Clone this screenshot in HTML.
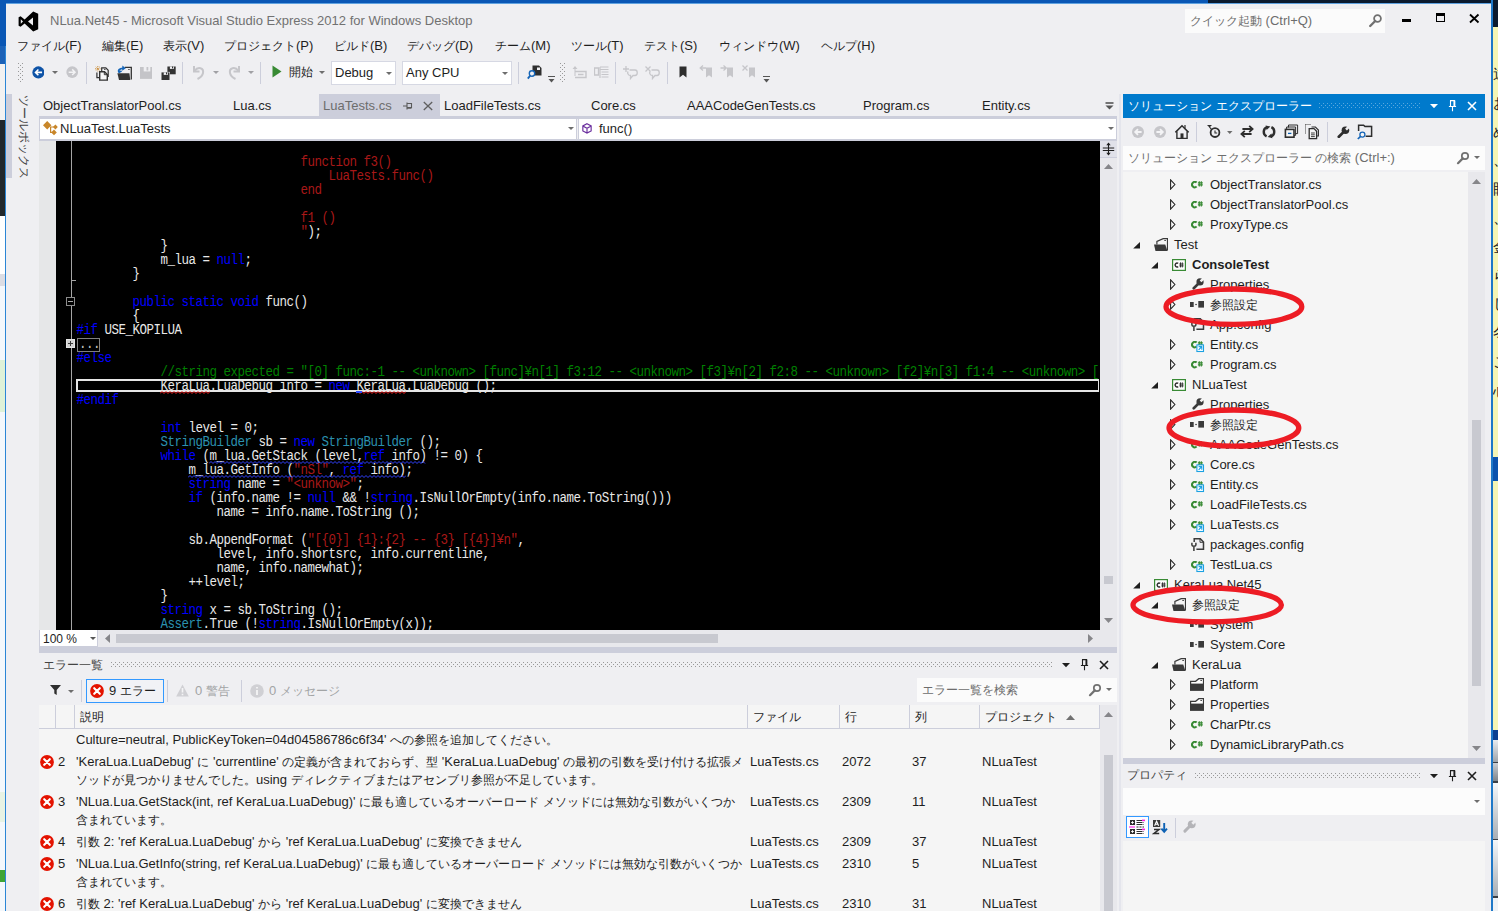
<!DOCTYPE html>
<html><head><meta charset="utf-8"><title>NLua.Net45 - Microsoft Visual Studio Express 2012 for Windows Desktop</title>
<style>
html,body{margin:0;padding:0;}
html{overflow:hidden;}
body{width:1498px;height:911px;overflow:hidden;position:relative;background:#fff;font-family:"Liberation Sans",sans-serif;font-size:13px;color:#1E1E1E;}
.a{position:absolute;box-sizing:border-box;}
.t{white-space:nowrap;}
.j{font-size:12px;}
.m{font-family:"Liberation Mono",monospace;font-size:12.5px;letter-spacing:-0.5px;white-space:pre;transform:scaleY(1.1);transform-origin:0 60%;}
.m .j{font-size:11.667px;}
.k{color:#0000FF;} .s{color:#A81818;} .c{color:#008000;} .y{color:#2B91AF;}
.sqr{background:repeating-linear-gradient(135deg,#f00 0 1px,transparent 1px 2px);}
</style></head><body>
<svg width="0" height="0" style="position:absolute"><defs>
<pattern id="pg" width="4" height="4" patternUnits="userSpaceOnUse"><rect x="0" y="0" width="1" height="1" fill="#999"/><rect x="2" y="2" width="1" height="1" fill="#999"/></pattern>
<pattern id="pb" width="4" height="4" patternUnits="userSpaceOnUse"><rect x="0" y="0" width="1" height="1" fill="#59A8DE"/><rect x="2" y="2" width="1" height="1" fill="#59A8DE"/></pattern>
</defs></svg>
<div class="a " style="left:0px;top:0px;width:1498px;height:4px;background:#0A57B5;"></div>
<div class="a " style="left:1208px;top:0px;width:290px;height:4px;background:#0B1A2E;"></div>
<div class="a " style="left:0px;top:0px;width:6px;height:911px;background:#F4F8FC;"></div>
<div class="a " style="left:0px;top:0px;width:6px;height:46px;background:#0A57B5;"></div>
<div class="a " style="left:0px;top:46px;width:6px;height:18px;background:#1C62B8;"></div>
<div class="a " style="left:0px;top:64px;width:6px;height:56px;background:#F2F2F2;"></div>
<div class="a " style="left:0px;top:120px;width:6px;height:96px;background:#22282C;"></div>
<div class="a " style="left:0px;top:216px;width:6px;height:60px;background:#FFFFFF;"></div>
<div class="a " style="left:0px;top:274px;width:6px;height:12px;background:#DCDDE4;"></div>
<div class="a " style="left:0px;top:360px;width:6px;height:52px;background:#DFF2D8;"></div>
<div class="a " style="left:0px;top:792px;width:6px;height:30px;background:#E8F3E4;"></div>
<div class="a " style="left:0px;top:870px;width:6px;height:12px;background:#3FA535;"></div>
<div class="a " style="left:5px;top:46px;width:1px;height:865px;background:#2B86D6;"></div>
<div class="a " style="left:1491px;top:0px;width:7px;height:911px;background:#F5F5B4;"></div>
<div class="a " style="left:1491px;top:0px;width:7px;height:27px;background:#0B1A2E;"></div>
<div class="a " style="left:1491px;top:457px;width:7px;height:24px;background:#0A52AE;"></div>
<div class="a " style="left:1491px;top:730px;width:7px;height:10px;background:#0A3F90;"></div>
<div class="a " style="left:1491px;top:740px;width:7px;height:22px;background:linear-gradient(180deg,#E8ECF0,#9EA4AA);"></div>
<div class="a " style="left:1491px;top:762px;width:7px;height:1px;background:#3A3F45;"></div>
<div class="a " style="left:1491px;top:763px;width:7px;height:18px;background:linear-gradient(180deg,#C9CED4,#7E848A);"></div>
<div class="a " style="left:1491px;top:781px;width:7px;height:1.5px;background:#3A3F45;"></div>
<div class="a " style="left:1491px;top:782.5px;width:7px;height:56px;background:linear-gradient(180deg,#F4F7FA,#A8AEB4);"></div>
<div class="a " style="left:1491px;top:838.5px;width:7px;height:1.5px;background:#3A3F45;"></div>
<div class="a " style="left:1491px;top:840px;width:7px;height:56px;background:linear-gradient(180deg,#F4F7FA,#A8AEB4);"></div>
<div class="a " style="left:1491px;top:896px;width:7px;height:1.5px;background:#3A3F45;"></div>
<div class="a " style="left:1491px;top:897.5px;width:7px;height:14px;background:#EEF2F6;"></div>
<div class="a " style="left:1491px;top:0px;width:2px;height:911px;background:#1E78C8;"></div>
<div class="a " style="left:6px;top:3px;width:1485px;height:908px;background:#EFEFF2;border-top:1px solid #5FA2E0;"></div>
<div class="a " style="left:1119px;top:94px;width:2px;height:817px;background:#E4E5EC;"></div>
<div class="a" style="left:1493px;top:60px;width:5px;height:360px;overflow:hidden;color:#222;font-size:15px;line-height:28.8px;white-space:pre;">遠
お
め
、
眼
、
金
ら
し
冬
こ
心</div>
<svg class="a" style="left:18px;top:11px;" width="21" height="21" viewBox="0 0 21 21"><path d="M15.2 0.6 L20.2 2.8 V18.2 L15.2 20.4 L6.6 12.6 L2.6 15.8 L0.6 14.8 V6.2 L2.6 5.2 L6.6 8.4 Z M15 6.4 L10 10.5 L15 14.6 Z M2.8 8.2 V12.8 L5 10.5 Z" fill="#000" fill-rule="evenodd"/></svg>
<div class="a t " style="left:50px;top:11.5px;height:18px;line-height:18px;color:#717171;font-size:13px;">NLua.Net45 - Microsoft Visual Studio Express 2012 for Windows Desktop</div>
<div class="a " style="left:1185px;top:9px;width:200px;height:24px;background:#FBFBFB;"></div>
<div class="a t " style="left:1190px;top:11.5px;height:18px;line-height:18px;color:#6D6D6D;"><span class="j">クイック起動</span> (Ctrl+Q)</div>
<svg class="a" style="left:1368px;top:13px;" width="15" height="15" viewBox="0 0 15 15"><circle cx="9.5" cy="5.5" r="3.4" fill="none" stroke="#717171" stroke-width="1.8"/><path d="M7.2 8 L2.2 13" stroke="#717171" stroke-width="2.4" stroke-linecap="round"/></svg>
<div class="a " style="left:1402px;top:19px;width:9px;height:3px;background:#000;"></div>
<div class="a " style="left:1436px;top:13px;width:9px;height:9px;border:1px solid #000;border-top:3px solid #000;"></div>
<svg class="a" style="left:1469px;top:13px;" width="11" height="11" viewBox="0 0 11 11"><path d="M1 1.5 L9.5 9.5 M9.5 1.5 L1 9.5" stroke="#000" stroke-width="1.8"/></svg>
<div class="a t " style="left:17px;top:36.5px;height:18px;line-height:18px;color:#1E1E1E;"><span class="j">ファイル</span>(F)</div>
<div class="a t " style="left:102px;top:36.5px;height:18px;line-height:18px;color:#1E1E1E;"><span class="j">編集</span>(E)</div>
<div class="a t " style="left:163px;top:36.5px;height:18px;line-height:18px;color:#1E1E1E;"><span class="j">表示</span>(V)</div>
<div class="a t " style="left:224px;top:36.5px;height:18px;line-height:18px;color:#1E1E1E;"><span class="j">プロジェクト</span>(P)</div>
<div class="a t " style="left:334px;top:36.5px;height:18px;line-height:18px;color:#1E1E1E;"><span class="j">ビルド</span>(B)</div>
<div class="a t " style="left:407px;top:36.5px;height:18px;line-height:18px;color:#1E1E1E;"><span class="j">デバッグ</span>(D)</div>
<div class="a t " style="left:495px;top:36.5px;height:18px;line-height:18px;color:#1E1E1E;"><span class="j">チーム</span>(M)</div>
<div class="a t " style="left:571px;top:36.5px;height:18px;line-height:18px;color:#1E1E1E;"><span class="j">ツール</span>(T)</div>
<div class="a t " style="left:644px;top:36.5px;height:18px;line-height:18px;color:#1E1E1E;"><span class="j">テスト</span>(S)</div>
<div class="a t " style="left:719px;top:36.5px;height:18px;line-height:18px;color:#1E1E1E;"><span class="j">ウィンドウ</span>(W)</div>
<div class="a t " style="left:821px;top:36.5px;height:18px;line-height:18px;color:#1E1E1E;"><span class="j">ヘルプ</span>(H)</div>
<svg class="a" style="left:18px;top:63px;" width="5" height="19" viewBox="0 0 5 19"><rect width="5" height="19" fill="url(#pg)"/></svg>
<svg class="a" style="left:31.6px;top:66px;" width="12.8" height="12.8" viewBox="0 0 14 14"><circle cx="7" cy="7" r="6.6" fill="#0E53A7"/><path d="M11 7 H4.2 M7 3.8 L3.8 7 L7 10.2" stroke="#fff" stroke-width="1.7" fill="none"/></svg>
<svg class="a" style="left:52px;top:71px;" width="6" height="3" viewBox="0 0 6 3"><path d="M0 0 H6 L3 3 Z" fill="#6D6D6D"/></svg>
<svg class="a" style="left:65.6px;top:66.4px;" width="12.4" height="12.4" viewBox="0 0 14 14"><circle cx="7" cy="7" r="6.6" fill="#C6C6CA"/><path d="M3 7 H9.8 M7 3.8 L10.2 7 L7 10.2" stroke="#F2F2F4" stroke-width="1.7" fill="none"/></svg>
<div class="a " style="left:86px;top:62px;width:1px;height:22px;background:#CCCEDB;"></div>
<svg class="a" style="left:94.5px;top:65.5px;" width="14" height="15" viewBox="0 0 14 15"><path d="M2.8 0 V5.6 M0 2.8 H5.6 M0.8 0.8 L4.8 4.8 M4.8 0.8 L0.8 4.8" stroke="#C8862A" stroke-width="0.9" stroke-dasharray="1 0.7"/><path d="M6.7 5 V1.9 H10.8 L13.2 4.3 V10.5 H12.5 M1.9 6.6 V11.7 H4" fill="none" stroke="#333" stroke-width="1.2"/><path d="M9 3.4 H10.6" stroke="#333" stroke-width="0.9"/><path d="M4.7 5.7 H9.5 L12.3 8.5 V14.1 H4.7 Z" fill="#F7F7F9" stroke="#333" stroke-width="1.4"/><path d="M9.3 5.9 V8.7 H12.1" fill="none" stroke="#333" stroke-width="1"/></svg>
<svg class="a" style="left:116.5px;top:65px;" width="15" height="15.4" viewBox="0 0 15 15.4"><path d="M7.8 2.3 H14.3 V14.6" fill="none" stroke="#333" stroke-width="1.3"/><path d="M11.2 4.5 H12.7" stroke="#333" stroke-width="0.9"/><path d="M0.4 8.3 H12.4 L13.3 14.9 H2 Z" fill="#333"/><path d="M2.6 7.6 C0.6 5.6 2.4 3.2 6.4 3.4" fill="none" stroke="#1565B8" stroke-width="1.9"/><path d="M5.4 0.6 L8.8 3.3 L5.2 5.8 Z" fill="#1565B8"/><path d="M2 7.2 L4.6 6" stroke="#1565B8" stroke-width="1.6"/></svg>
<svg class="a" style="left:140px;top:67px;" width="12.2" height="12" viewBox="0 0 12.2 12"><rect x="0" y="0" width="12.2" height="11.9" fill="#C4C4C8"/><rect x="3.7" y="0" width="6.6" height="4.4" fill="#EFEFF2"/><rect x="6.5" y="0" width="1.8" height="3.5" fill="#C4C4C8"/></svg>
<svg class="a" style="left:160.5px;top:65.5px;" width="15.5" height="14.6" viewBox="0 0 15.5 14.6"><rect x="6.4" y="0.5" width="8.3" height="7.8" fill="#333"/><rect x="8.9" y="0.5" width="4" height="2.4" fill="#EFEFF2"/><rect x="11" y="0.5" width="1.1" height="1.9" fill="#333"/><rect x="0" y="5.9" width="9" height="8.7" fill="#EFEFF2"/><rect x="0.5" y="6.4" width="8" height="7.8" fill="#333"/><rect x="2.7" y="6.4" width="4.2" height="2.5" fill="#EFEFF2"/><rect x="5" y="6.4" width="1.1" height="2" fill="#333"/></svg>
<div class="a " style="left:182px;top:62px;width:1px;height:22px;background:#CCCEDB;"></div>
<svg class="a" style="left:191px;top:65px;" width="15" height="15" viewBox="0 0 15 15"><path d="M3 1 V6.5 H8.5" fill="none" stroke="#C6C6CA" stroke-width="2"/><path d="M3.5 6 C7 1 13 3 12 8 C11.5 10.5 9.5 12.5 6.5 14" fill="none" stroke="#C6C6CA" stroke-width="2"/></svg>
<svg class="a" style="left:213px;top:71px;" width="6" height="3" viewBox="0 0 6 3"><path d="M0 0 H6 L3 3 Z" fill="#A0A0A4"/></svg>
<svg class="a" style="left:227px;top:65px;" width="15" height="15" viewBox="0 0 15 15"><path d="M12 1 V6.5 H6.5" fill="none" stroke="#C6C6CA" stroke-width="2"/><path d="M11.5 6 C8 1 2 3 3 8 C3.5 10.5 5.5 12.5 8.5 14" fill="none" stroke="#C6C6CA" stroke-width="2"/></svg>
<svg class="a" style="left:248px;top:71px;" width="6" height="3" viewBox="0 0 6 3"><path d="M0 0 H6 L3 3 Z" fill="#A0A0A4"/></svg>
<div class="a " style="left:260px;top:62px;width:1px;height:22px;background:#CCCEDB;"></div>
<svg class="a" style="left:272px;top:65px;" width="10" height="13" viewBox="0 0 10 13"><path d="M0.5 0.5 L9.5 6.5 L0.5 12.5 Z" fill="#388A34"/></svg>
<div class="a t " style="left:289px;top:63px;height:18px;line-height:18px;color:#1E1E1E;"><span class="j">開始</span></div>
<svg class="a" style="left:319px;top:71px;" width="6" height="3" viewBox="0 0 6 3"><path d="M0 0 H6 L3 3 Z" fill="#6D6D6D"/></svg>
<div class="a " style="left:331px;top:61px;width:65px;height:24px;background:#FFFFFF;border:1px solid #D6D8E3;"></div>
<div class="a t " style="left:335px;top:63.5px;height:18px;line-height:18px;color:#1E1E1E;">Debug</div>
<svg class="a" style="left:386px;top:72px;" width="6" height="3" viewBox="0 0 6 3"><path d="M0 0 H6 L3 3 Z" fill="#6D6D6D"/></svg>
<div class="a " style="left:402px;top:61px;width:110px;height:24px;background:#FFFFFF;border:1px solid #D6D8E3;"></div>
<div class="a t " style="left:406px;top:63.5px;height:18px;line-height:18px;color:#1E1E1E;">Any CPU</div>
<svg class="a" style="left:502px;top:72px;" width="6" height="3" viewBox="0 0 6 3"><path d="M0 0 H6 L3 3 Z" fill="#6D6D6D"/></svg>
<div class="a " style="left:518px;top:62px;width:1px;height:22px;background:#CCCEDB;"></div>
<svg class="a" style="left:527px;top:64px;" width="16" height="16" viewBox="0 0 16 16"><path d="M5.5 1.5 H12 L14.5 4 V11.5 H5.5 Z" fill="#2E2E2E"/><rect x="10" y="3.5" width="3" height="2.5" fill="#EFEFF2"/><circle cx="5" cy="9.5" r="2.7" fill="#EFEFF2" stroke="#1565B8" stroke-width="1.4"/><path d="M3.2 11.6 L0.8 14.6" stroke="#1565B8" stroke-width="1.8"/></svg>
<svg class="a" style="left:548px;top:76px;" width="7" height="7" viewBox="0 0 7 7"><path d="M0 0.5 H7" stroke="#555" stroke-width="1"/><path d="M0.5 3 H6.5 L3.5 6.5 Z" fill="#555"/></svg>
<svg class="a" style="left:560px;top:63px;" width="5" height="19" viewBox="0 0 5 19"><rect width="5" height="19" fill="url(#pg)"/></svg>
<svg class="a" style="left:572px;top:66px;" width="15" height="13" viewBox="0 0 15 13"><path d="M3 0 L0.5 3 H5.5 Z M2.5 3 H3.5 V10 H2.5 Z" fill="#C6C6CA"/><path d="M3 5.5 H14 V11.5 H3 M6 8.5 H11.5" fill="none" stroke="#C6C6CA" stroke-width="1.4"/></svg>
<svg class="a" style="left:594px;top:66px;" width="15" height="13" viewBox="0 0 15 13"><path d="M0.5 2 H4.5 V9 H0.5 Z" fill="none" stroke="#C6C6CA" stroke-width="1.3"/><path d="M6 1 H14.5 M6 3.5 H14.5 M7.5 6 H14.5 M7.5 8.5 H14.5 M7.5 11 H14.5 M6 1 V12" stroke="#C6C6CA" stroke-width="1.2" fill="none"/></svg>
<div class="a " style="left:615px;top:62px;width:1px;height:22px;background:#CCCEDB;"></div>
<svg class="a" style="left:623px;top:66px;" width="16" height="14" viewBox="0 0 16 14"><path d="M3 0 V6 M0 3 H6" stroke="#C6C6CA" stroke-width="1.3"/><path d="M6.5 4 H12 C15 4 15 9.5 12 9.5 H10 L7.5 12.5 V9.5 C4.5 9.5 4.5 6.5 5 5.5" fill="none" stroke="#C6C6CA" stroke-width="1.3"/></svg>
<svg class="a" style="left:645px;top:66px;" width="16" height="14" viewBox="0 0 16 14"><path d="M0.5 0.5 L5.5 5.5 M5.5 0.5 L0.5 5.5" stroke="#C6C6CA" stroke-width="1.3"/><path d="M6.5 4 H12 C15 4 15 9.5 12 9.5 H10 L7.5 12.5 V9.5 C4.5 9.5 4.5 6.5 5 5.5" fill="none" stroke="#C6C6CA" stroke-width="1.3"/></svg>
<div class="a " style="left:667px;top:62px;width:1px;height:22px;background:#CCCEDB;"></div>
<svg class="a" style="left:679px;top:66px;" width="8" height="12" viewBox="0 0 8 12"><path d="M0.5 0.5 H7.5 V11.5 L4 8.8 L0.5 11.5 Z" fill="#2E2E2E"/></svg>
<svg class="a" style="left:699px;top:65px;" width="14" height="13" viewBox="0 0 14 13"><path d="M7 2.5 H13 V12.5 L10 10.2 L7 12.5 Z" fill="#C6C6CA"/><path d="M7 3 H1.5 M4 0.5 L1.2 3 L4 5.5" stroke="#C6C6CA" stroke-width="1.3" fill="none"/></svg>
<svg class="a" style="left:720px;top:65px;" width="14" height="13" viewBox="0 0 14 13"><path d="M7 2.5 H13 V12.5 L10 10.2 L7 12.5 Z" fill="#C6C6CA"/><path d="M0.5 3 H6 M3.5 0.5 L6.3 3 L3.5 5.5" stroke="#C6C6CA" stroke-width="1.3" fill="none"/></svg>
<svg class="a" style="left:742px;top:65px;" width="14" height="13" viewBox="0 0 14 13"><path d="M7 2.5 H13 V12.5 L10 10.2 L7 12.5 Z" fill="#C6C6CA"/><path d="M0.5 0.5 L5.5 5.5 M5.5 0.5 L0.5 5.5" stroke="#C6C6CA" stroke-width="1.3" fill="none"/></svg>
<svg class="a" style="left:763px;top:76px;" width="7" height="7" viewBox="0 0 7 7"><path d="M0 0.5 H7" stroke="#555" stroke-width="1"/><path d="M0.5 3 H6.5 L3.5 6.5 Z" fill="#555"/></svg>
<div class="a " style="left:6px;top:94px;width:6px;height:84px;background:#CCCEDB;"></div>
<div class="a t" style="left:32.5px;top:95px;height:18px;line-height:18px;transform-origin:0 0;transform:rotate(90deg);color:#444;"><span class="j">ツールボックス</span></div>
<div class="a " style="left:319px;top:94px;width:121px;height:23px;background:#CCCEDB;"></div>
<div class="a " style="left:39px;top:116px;width:1078px;height:3px;background:#CCCEDB;"></div>
<div class="a t " style="left:43px;top:96.8px;height:18px;line-height:18px;color:#1E1E1E;">ObjectTranslatorPool.cs</div>
<div class="a t " style="left:233px;top:96.8px;height:18px;line-height:18px;color:#1E1E1E;">Lua.cs</div>
<div class="a t " style="left:323px;top:96.8px;height:18px;line-height:18px;color:#6D6D6D;">LuaTests.cs</div>
<div class="a t " style="left:444px;top:96.8px;height:18px;line-height:18px;color:#1E1E1E;">LoadFileTests.cs</div>
<div class="a t " style="left:591px;top:96.8px;height:18px;line-height:18px;color:#1E1E1E;">Core.cs</div>
<div class="a t " style="left:687px;top:96.8px;height:18px;line-height:18px;color:#1E1E1E;">AAACodeGenTests.cs</div>
<div class="a t " style="left:863px;top:96.8px;height:18px;line-height:18px;color:#1E1E1E;">Program.cs</div>
<div class="a t " style="left:982px;top:96.8px;height:18px;line-height:18px;color:#1E1E1E;">Entity.cs</div>
<svg class="a" style="left:402.5px;top:101.6px;" width="10" height="8" viewBox="0 0 10 8"><path d="M0 4 H4 M4 0.5 V7.5 M4 1.5 H8.5 V5.5 H4 M4 6.2 H8.5" stroke="#5A5A5A" stroke-width="1.1" fill="none"/></svg>
<svg class="a" style="left:423px;top:101px;" width="10" height="10" viewBox="0 0 10 10"><path d="M0.8 1 L9.2 9 M9.2 1 L0.8 9" stroke="#5F5F5F" stroke-width="1.3"/></svg>
<svg class="a" style="left:1105px;top:102px;" width="9" height="8" viewBox="0 0 9 8"><path d="M0.5 1 H8.5" stroke="#555" stroke-width="1.6"/><path d="M0.5 3.5 H8.5 L4.5 7.5 Z" fill="#555"/></svg>
<div class="a " style="left:39px;top:119px;width:538px;height:20px;background:#FFFFFF;border:1px solid #CCCEDB;border-top:0;border-bottom:0;"></div>
<div class="a " style="left:578px;top:119px;width:539px;height:20px;background:#FFFFFF;border:1px solid #CCCEDB;border-top:0;border-bottom:0;"></div>
<svg class="a" style="left:43px;top:121px;" width="16" height="15" viewBox="0 0 16 15"><path d="M4.2 0.1 L8.4 4.3 L4.2 8.5 L0 4.3 Z M12.4 3.6 L14.8 6 L12.4 8.4 L10 6 Z M11 8.6 L13.8 11.4 L11 14.2 L8.2 11.4 Z" fill="#C8862A"/><path d="M7 6 H11 M7.6 6 V11.4 H9.4" stroke="#C8862A" stroke-width="1.2" fill="none"/></svg>
<div class="a t " style="left:60px;top:119.5px;height:18px;line-height:18px;color:#1E1E1E;">NLuaTest.LuaTests</div>
<svg class="a" style="left:568px;top:127px;" width="6" height="3" viewBox="0 0 6 3"><path d="M0 0 H6 L3 3 Z" fill="#6D6D6D"/></svg>
<svg class="a" style="left:581.5px;top:123px;" width="10" height="10.8" viewBox="0 0 12 13"><path d="M6 0.8 L11 3.5 V9.5 L6 12.2 L1 9.5 V3.5 Z M1 3.5 L6 6.3 L11 3.5 M6 6.3 V12.2" fill="none" stroke="#6A2E9E" stroke-width="1.4"/></svg>
<div class="a t " style="left:599px;top:119.5px;height:18px;line-height:18px;color:#1E1E1E;">func()</div>
<svg class="a" style="left:1108px;top:127px;" width="6" height="3" viewBox="0 0 6 3"><path d="M0 0 H6 L3 3 Z" fill="#6D6D6D"/></svg>
<div class="a " style="left:39px;top:139px;width:1078px;height:2px;background:#CCCEDB;"></div>
<div class="a " style="left:39px;top:141px;width:17px;height:489px;background:#E6E7E8;"></div>
<div class="a " style="left:56px;top:141px;width:1044px;height:489px;background:#000000;"></div>
<div class="a " style="left:71px;top:141px;width:1px;height:489px;background:#A5A5A5;"></div>
<div class="a " style="left:71px;top:280px;width:5px;height:1px;background:#A5A5A5;"></div>
<div class="a" style="left:56px;top:140px;width:1044px;height:490px;overflow:hidden;color:#E8E8E8;">
<div class="a m" style="left:244.5px;top:16px;height:14px;line-height:14px;"><span class="s">function f3()</span></div>
<div class="a m" style="left:272.5px;top:30px;height:14px;line-height:14px;"><span class="s">LuaTests.func()</span></div>
<div class="a m" style="left:244.5px;top:44px;height:14px;line-height:14px;"><span class="s">end</span></div>
<div class="a m" style="left:244.5px;top:72px;height:14px;line-height:14px;"><span class="s">f1 ()</span></div>
<div class="a m" style="left:244.5px;top:86px;height:14px;line-height:14px;"><span class="s">"</span>);</div>
<div class="a m" style="left:104.5px;top:100px;height:14px;line-height:14px;">}</div>
<div class="a m" style="left:104.5px;top:114px;height:14px;line-height:14px;">m_lua = <span class="k">null</span>;</div>
<div class="a m" style="left:76.5px;top:128px;height:14px;line-height:14px;">}</div>
<div class="a m" style="left:76.5px;top:156px;height:14px;line-height:14px;"><span class="k">public static void</span> func()</div>
<div class="a m" style="left:76.5px;top:170px;height:14px;line-height:14px;">{</div>
<div class="a m" style="left:20.5px;top:184px;height:14px;line-height:14px;"><span class="k">#if</span> USE_KOPILUA</div>
<div class="a m" style="left:20.5px;top:212px;height:14px;line-height:14px;"><span class="k">#else</span></div>
<div class="a m" style="left:104.5px;top:226px;height:14px;line-height:14px;"><span class="c">//string expected = "[0] func:-1 -- &lt;unknown&gt; [func]¥n[1] f3:12 -- &lt;unknown&gt; [f3]¥n[2] f2:8 -- &lt;unknown&gt; [f2]¥n[3] f1:4 -- &lt;unknown&gt; [</span></div>
<div class="a m" style="left:104.5px;top:240px;height:14px;line-height:14px;">KeraLua.LuaDebug info = <span class="k">new</span> KeraLua.LuaDebug ();</div>
<div class="a m" style="left:20.5px;top:254px;height:14px;line-height:14px;"><span class="k">#endif</span></div>
<div class="a m" style="left:104.5px;top:282px;height:14px;line-height:14px;"><span class="k">int</span> level = 0;</div>
<div class="a m" style="left:104.5px;top:296px;height:14px;line-height:14px;"><span class="y">StringBuilder</span> sb = <span class="k">new</span> <span class="y">StringBuilder</span> ();</div>
<div class="a m" style="left:104.5px;top:310px;height:14px;line-height:14px;"><span class="k">while</span> (m_lua.GetStack (level,<span class="k">ref</span> info) != 0) {</div>
<div class="a m" style="left:132.5px;top:324px;height:14px;line-height:14px;">m_lua.GetInfo (<span class="s">"nSl"</span>, <span class="k">ref</span> info);</div>
<div class="a m" style="left:132.5px;top:338px;height:14px;line-height:14px;"><span class="k">string</span> name = <span class="s">"&lt;unknow&gt;"</span>;</div>
<div class="a m" style="left:132.5px;top:352px;height:14px;line-height:14px;"><span class="k">if</span> (info.name != <span class="k">null</span> &amp;&amp; !<span class="k">string</span>.IsNullOrEmpty(info.name.ToString()))</div>
<div class="a m" style="left:160.5px;top:366px;height:14px;line-height:14px;">name = info.name.ToString ();</div>
<div class="a m" style="left:132.5px;top:394px;height:14px;line-height:14px;">sb.AppendFormat (<span class="s">"[{0}] {1}:{2} -- {3} [{4}]¥n"</span>,</div>
<div class="a m" style="left:160.5px;top:408px;height:14px;line-height:14px;">level, info.shortsrc, info.currentline,</div>
<div class="a m" style="left:160.5px;top:422px;height:14px;line-height:14px;">name, info.namewhat);</div>
<div class="a m" style="left:132.5px;top:436px;height:14px;line-height:14px;">++level;</div>
<div class="a m" style="left:104.5px;top:450px;height:14px;line-height:14px;">}</div>
<div class="a m" style="left:104.5px;top:464px;height:14px;line-height:14px;"><span class="k">string</span> x = sb.ToString ();</div>
<div class="a m" style="left:104.5px;top:478px;height:14px;line-height:14px;"><span class="y">Assert</span>.True (!<span class="k">string</span>.IsNullOrEmpty(x));</div>
</div>
<div class="a " style="left:76px;top:379px;width:1023px;height:13px;border:2px solid #E6E6E6;border-right-width:1px;"></div>
<div class="a " style="left:77px;top:337.5px;width:23px;height:14px;border:1px solid #808080;"></div>
<div class="a m" style="left:79px;top:338px;height:14px;line-height:14px;color:#C0C0C0;">...</div>
<svg class="a" style="left:66px;top:297px;" width="9" height="9" viewBox="0 0 9 9"><rect x="0.5" y="0.5" width="8" height="8" fill="#000" stroke="#8C8C8C"/><path d="M2 4.5 H7" stroke="#A8A8A8"/></svg>
<svg class="a" style="left:66px;top:339.4px;" width="9" height="9" viewBox="0 0 9 9"><rect x="0.5" y="0.5" width="8" height="8" fill="#D2D2D2" stroke="#E4E4E4"/><path d="M2 4.5 H7 M4.5 2 V7" stroke="#3A3A3A"/></svg>
<svg class="a" style="left:160px;top:391px;" width="50" height="3" viewBox="0 0 50 3"><polyline points="0,2.5 2,0.5 4,2.5 6,0.5 8,2.5 10,0.5 12,2.5 14,0.5 16,2.5 18,0.5 20,2.5 22,0.5 24,2.5 26,0.5 28,2.5 30,0.5 32,2.5 34,0.5 36,2.5 38,0.5 40,2.5 42,0.5 44,2.5 46,0.5 48,2.5 50,0.5" fill="none" stroke="#FF2020" stroke-width="1"/></svg>
<svg class="a" style="left:356px;top:391px;" width="50" height="3" viewBox="0 0 50 3"><polyline points="0,2.5 2,0.5 4,2.5 6,0.5 8,2.5 10,0.5 12,2.5 14,0.5 16,2.5 18,0.5 20,2.5 22,0.5 24,2.5 26,0.5 28,2.5 30,0.5 32,2.5 34,0.5 36,2.5 38,0.5 40,2.5 42,0.5 44,2.5 46,0.5 48,2.5 50,0.5" fill="none" stroke="#FF2020" stroke-width="1"/></svg>
<div class="a " style="left:356px;top:391px;width:6px;height:2px;background:#3050FF;"></div>
<svg class="a" style="left:209px;top:461px;" width="217" height="3" viewBox="0 0 217 3"><polyline points="0,2.5 2,0.5 4,2.5 6,0.5 8,2.5 10,0.5 12,2.5 14,0.5 16,2.5 18,0.5 20,2.5 22,0.5 24,2.5 26,0.5 28,2.5 30,0.5 32,2.5 34,0.5 36,2.5 38,0.5 40,2.5 42,0.5 44,2.5 46,0.5 48,2.5 50,0.5 52,2.5 54,0.5 56,2.5 58,0.5 60,2.5 62,0.5 64,2.5 66,0.5 68,2.5 70,0.5 72,2.5 74,0.5 76,2.5 78,0.5 80,2.5 82,0.5 84,2.5 86,0.5 88,2.5 90,0.5 92,2.5 94,0.5 96,2.5 98,0.5 100,2.5 102,0.5 104,2.5 106,0.5 108,2.5 110,0.5 112,2.5 114,0.5 116,2.5 118,0.5 120,2.5 122,0.5 124,2.5 126,0.5 128,2.5 130,0.5 132,2.5 134,0.5 136,2.5 138,0.5 140,2.5 142,0.5 144,2.5 146,0.5 148,2.5 150,0.5 152,2.5 154,0.5 156,2.5 158,0.5 160,2.5 162,0.5 164,2.5 166,0.5 168,2.5 170,0.5 172,2.5 174,0.5 176,2.5 178,0.5 180,2.5 182,0.5 184,2.5 186,0.5 188,2.5 190,0.5 192,2.5 194,0.5 196,2.5 198,0.5 200,2.5 202,0.5 204,2.5 206,0.5 208,2.5 210,0.5 212,2.5 214,0.5 216,2.5" fill="none" stroke="#3040FF" stroke-width="1"/></svg>
<svg class="a" style="left:188px;top:475px;" width="218" height="3" viewBox="0 0 218 3"><polyline points="0,2.5 2,0.5 4,2.5 6,0.5 8,2.5 10,0.5 12,2.5 14,0.5 16,2.5 18,0.5 20,2.5 22,0.5 24,2.5 26,0.5 28,2.5 30,0.5 32,2.5 34,0.5 36,2.5 38,0.5 40,2.5 42,0.5 44,2.5 46,0.5 48,2.5 50,0.5 52,2.5 54,0.5 56,2.5 58,0.5 60,2.5 62,0.5 64,2.5 66,0.5 68,2.5 70,0.5 72,2.5 74,0.5 76,2.5 78,0.5 80,2.5 82,0.5 84,2.5 86,0.5 88,2.5 90,0.5 92,2.5 94,0.5 96,2.5 98,0.5 100,2.5 102,0.5 104,2.5 106,0.5 108,2.5 110,0.5 112,2.5 114,0.5 116,2.5 118,0.5 120,2.5 122,0.5 124,2.5 126,0.5 128,2.5 130,0.5 132,2.5 134,0.5 136,2.5 138,0.5 140,2.5 142,0.5 144,2.5 146,0.5 148,2.5 150,0.5 152,2.5 154,0.5 156,2.5 158,0.5 160,2.5 162,0.5 164,2.5 166,0.5 168,2.5 170,0.5 172,2.5 174,0.5 176,2.5 178,0.5 180,2.5 182,0.5 184,2.5 186,0.5 188,2.5 190,0.5 192,2.5 194,0.5 196,2.5 198,0.5 200,2.5 202,0.5 204,2.5 206,0.5 208,2.5 210,0.5 212,2.5 214,0.5 216,2.5 218,0.5" fill="none" stroke="#3040FF" stroke-width="1"/></svg>
<div class="a " style="left:1100px;top:141px;width:17px;height:489px;background:#E8E8EC;"></div>
<div class="a " style="left:1100px;top:141px;width:17px;height:16.5px;background:#E0E1E9;border-bottom:1px solid #CCCEDB;"></div>
<svg class="a" style="left:1102px;top:142px;" width="13" height="14" viewBox="0 0 13 14"><path d="M0.8 6 H12.2 M0.8 8.5 H12.2 M6.5 1 V13" stroke="#1E1E1E" stroke-width="1.1" fill="none"/><path d="M4.3 3.2 L6.5 0.6 L8.7 3.2 Z M4.3 10.8 L6.5 13.4 L8.7 10.8 Z" fill="#1E1E1E"/></svg>
<svg class="a" style="left:1104px;top:164px;" width="9" height="5" viewBox="0 0 9 5"><path d="M0 5 L4.5 0 L9 5 Z" fill="#86868A"/></svg>
<div class="a " style="left:1104px;top:576px;width:9px;height:8px;background:#C8C9D0;"></div>
<svg class="a" style="left:1104px;top:618px;" width="9" height="5" viewBox="0 0 9 5"><path d="M0 0 L4.5 5 L9 0 Z" fill="#86868A"/></svg>
<div class="a " style="left:39px;top:630px;width:1078px;height:17px;background:#E8E8EC;"></div>
<div class="a " style="left:39px;top:630px;width:59px;height:17px;background:#FFFFFF;border:1px solid #CCCEDB;border-top:0;"></div>
<div class="a t " style="left:43px;top:630px;height:18px;line-height:18px;color:#1E1E1E;font-size:12px;">100 %</div>
<svg class="a" style="left:90px;top:637px;" width="6" height="3" viewBox="0 0 6 3"><path d="M0 0 H6 L3 3 Z" fill="#555"/></svg>
<svg class="a" style="left:105px;top:634px;" width="5" height="9" viewBox="0 0 5 9"><path d="M5 0 L0 4.5 L5 9 Z" fill="#86868A"/></svg>
<div class="a " style="left:116px;top:634px;width:602px;height:9px;background:#C8C9D0;"></div>
<svg class="a" style="left:1088px;top:634px;" width="5" height="9" viewBox="0 0 5 9"><path d="M0 0 L5 4.5 L0 9 Z" fill="#86868A"/></svg>
<div class="a " style="left:39px;top:647px;width:1078px;height:6px;background:#CCCEDB;"></div>
<div class="a t " style="left:43px;top:655.5px;height:18px;line-height:18px;color:#444;"><span class="j">エラー一覧</span></div>
<svg class="a" style="left:111px;top:662px;" width="941" height="5" viewBox="0 0 941 5"><rect width="941" height="5" fill="url(#pg)"/></svg>
<svg class="a" style="left:1062px;top:663.4px;" width="8" height="4.2" viewBox="0 0 8 4.2"><path d="M0 0 H8 L4 4.2 Z" fill="#1E1E1E"/></svg>
<svg class="a" style="left:1080px;top:659px;" width="9" height="12" viewBox="0 0 9 12"><path d="M2 0.6 H7 M2.5 0.6 V6.5 M6 0.6 V6.5 M6.8 0.6 V6.5 M0.9 6.5 H8.1 M4.5 6.5 V11.2" stroke="#1E1E1E" stroke-width="1.1" fill="none"/></svg>
<svg class="a" style="left:1099px;top:660px;" width="10" height="10" viewBox="0 0 10 10"><path d="M1 1 L9 9 M9 1 L1 9" stroke="#1E1E1E" stroke-width="1.6"/></svg>
<svg class="a" style="left:50px;top:685px;" width="11" height="10" viewBox="0 0 11 10"><path d="M0 0 H11 L6.7 5 V10 L4.3 8.5 V5 Z" fill="#2E2E2E"/></svg>
<svg class="a" style="left:68px;top:690px;" width="6" height="3" viewBox="0 0 6 3"><path d="M0 0 H6 L3 3 Z" fill="#6D6D6D"/></svg>
<div class="a " style="left:81px;top:680px;width:1px;height:22px;background:#CCCEDB;"></div>
<div class="a " style="left:86px;top:679px;width:78px;height:24px;background:#F1F2F6;border:1px solid #3399FF;"></div>
<svg class="a" style="left:90px;top:683.5px;" width="14" height="14" viewBox="0 0 14 14"><circle cx="7" cy="7" r="6.9" fill="#E41300"/><path d="M4.2 4.2 L9.8 9.8 M9.8 4.2 L4.2 9.8" stroke="#fff" stroke-width="2.1" stroke-linecap="round"/></svg>
<div class="a t " style="left:109px;top:681.5px;height:18px;line-height:18px;color:#1E1E1E;">9 <span class="j">エラー</span></div>
<div class="a " style="left:167px;top:680px;width:1px;height:22px;background:#CCCEDB;"></div>
<svg class="a" style="left:176px;top:684px;" width="13" height="13" viewBox="0 0 13 13"><path d="M6.5 0.5 L12.8 12.5 H0.2 Z" fill="#D0D0D4"/><path d="M6.5 4 V8.5 M6.5 9.8 V11.3" stroke="#F4F4F6" stroke-width="1.6"/></svg>
<div class="a t " style="left:195px;top:681.5px;height:18px;line-height:18px;color:#A2A4A5;">0 <span class="j">警告</span></div>
<div class="a " style="left:241px;top:680px;width:1px;height:22px;background:#CCCEDB;"></div>
<svg class="a" style="left:250px;top:684px;" width="14" height="14" viewBox="0 0 14 14"><circle cx="7" cy="7" r="6.8" fill="#D0D0D4"/><path d="M7 6 V11 M7 3 V4.6" stroke="#F4F4F6" stroke-width="1.8"/></svg>
<div class="a t " style="left:269px;top:681.5px;height:18px;line-height:18px;color:#A2A4A5;">0 <span class="j">メッセージ</span></div>
<div class="a " style="left:917px;top:678px;width:200px;height:24px;background:#FBFBFB;"></div>
<div class="a t " style="left:922px;top:681px;height:18px;line-height:18px;color:#6D6D6D;"><span class="j">エラー一覧を検索</span></div>
<svg class="a" style="left:1088px;top:683px;" width="14" height="14" viewBox="0 0 14 14"><circle cx="9" cy="5" r="3.2" fill="none" stroke="#717171" stroke-width="1.7"/><path d="M6.8 7.4 L2 12.2" stroke="#717171" stroke-width="2.2" stroke-linecap="round"/></svg>
<svg class="a" style="left:1106px;top:688px;" width="6" height="3" viewBox="0 0 6 3"><path d="M0 0 H6 L3 3 Z" fill="#6D6D6D"/></svg>
<div class="a " style="left:39px;top:705px;width:1061px;height:206px;background:#F5F5F5;"></div>
<div class="a " style="left:39px;top:727.5px;width:1061px;height:1px;background:#CCCEDB;"></div>
<div class="a " style="left:55px;top:705px;width:1px;height:23px;background:#CCCEDB;"></div>
<div class="a " style="left:74px;top:705px;width:1px;height:23px;background:#CCCEDB;"></div>
<div class="a " style="left:747px;top:705px;width:1px;height:23px;background:#CCCEDB;"></div>
<div class="a " style="left:839px;top:705px;width:1px;height:23px;background:#CCCEDB;"></div>
<div class="a " style="left:909px;top:705px;width:1px;height:23px;background:#CCCEDB;"></div>
<div class="a " style="left:979px;top:705px;width:1px;height:23px;background:#CCCEDB;"></div>
<div class="a " style="left:1099px;top:705px;width:1px;height:23px;background:#CCCEDB;"></div>
<div class="a t " style="left:80px;top:707.5px;height:18px;line-height:18px;color:#1E1E1E;"><span class="j">説明</span></div>
<div class="a t " style="left:753px;top:707.5px;height:18px;line-height:18px;color:#1E1E1E;"><span class="j">ファイル</span></div>
<div class="a t " style="left:845px;top:707.5px;height:18px;line-height:18px;color:#1E1E1E;"><span class="j">行</span></div>
<div class="a t " style="left:915px;top:707.5px;height:18px;line-height:18px;color:#1E1E1E;"><span class="j">列</span></div>
<div class="a t " style="left:985px;top:707.5px;height:18px;line-height:18px;color:#1E1E1E;"><span class="j">プロジェクト</span></div>
<svg class="a" style="left:1066px;top:714.6px;" width="9" height="5" viewBox="0 0 9 5"><path d="M0 5 L4.5 0 L9 5 Z" fill="#717171"/></svg>
<div class="a" style="left:40px;top:728px;width:1060px;height:183px;overflow:hidden;">
<div class="a t" style="left:36px;top:2.8px;height:18px;line-height:18px;width:670px;overflow:hidden;">Culture=neutral, PublicKeyToken=04d04586786c6f34' <span class="j">への参照を追加してください。</span></div>
<svg class="a" style="left:0px;top:26.8px;" width="14" height="14" viewBox="0 0 14 14"><circle cx="7" cy="7" r="6.9" fill="#E41300"/><path d="M4.2 4.2 L9.8 9.8 M9.8 4.2 L4.2 9.8" stroke="#fff" stroke-width="2.1" stroke-linecap="round"/></svg>
<div class="a t" style="left:18px;top:24.8px;height:18px;line-height:18px;">2</div>
<div class="a t" style="left:36px;top:24.8px;height:18px;line-height:18px;width:670px;overflow:hidden;">'KeraLua.LuaDebug' <span class="j">に</span> 'currentline' <span class="j">の定義が含まれておらず、型</span> 'KeraLua.LuaDebug' <span class="j">の最初の引数を受け付ける拡張メ</span></div>
<div class="a t" style="left:710px;top:24.8px;height:18px;line-height:18px;">LuaTests.cs</div>
<div class="a t" style="left:802px;top:24.8px;height:18px;line-height:18px;">2072</div>
<div class="a t" style="left:872px;top:24.8px;height:18px;line-height:18px;">37</div>
<div class="a t" style="left:942px;top:24.8px;height:18px;line-height:18px;">NLuaTest</div>
<div class="a t" style="left:36px;top:42.8px;height:18px;line-height:18px;width:670px;overflow:hidden;"><span class="j">ソッドが見つかりませんでした。</span>using <span class="j">ディレクティブまたはアセンブリ参照が不足しています。</span></div>
<svg class="a" style="left:0px;top:66.8px;" width="14" height="14" viewBox="0 0 14 14"><circle cx="7" cy="7" r="6.9" fill="#E41300"/><path d="M4.2 4.2 L9.8 9.8 M9.8 4.2 L4.2 9.8" stroke="#fff" stroke-width="2.1" stroke-linecap="round"/></svg>
<div class="a t" style="left:18px;top:64.8px;height:18px;line-height:18px;">3</div>
<div class="a t" style="left:36px;top:64.8px;height:18px;line-height:18px;width:670px;overflow:hidden;">'NLua.Lua.GetStack(int, ref KeraLua.LuaDebug)' <span class="j">に最も適しているオーバーロード</span> <span class="j">メソッドには無効な引数がいくつか</span></div>
<div class="a t" style="left:710px;top:64.8px;height:18px;line-height:18px;">LuaTests.cs</div>
<div class="a t" style="left:802px;top:64.8px;height:18px;line-height:18px;">2309</div>
<div class="a t" style="left:872px;top:64.8px;height:18px;line-height:18px;">11</div>
<div class="a t" style="left:942px;top:64.8px;height:18px;line-height:18px;">NLuaTest</div>
<div class="a t" style="left:36px;top:82.8px;height:18px;line-height:18px;width:670px;overflow:hidden;"><span class="j">含まれています。</span></div>
<svg class="a" style="left:0px;top:106.8px;" width="14" height="14" viewBox="0 0 14 14"><circle cx="7" cy="7" r="6.9" fill="#E41300"/><path d="M4.2 4.2 L9.8 9.8 M9.8 4.2 L4.2 9.8" stroke="#fff" stroke-width="2.1" stroke-linecap="round"/></svg>
<div class="a t" style="left:18px;top:104.8px;height:18px;line-height:18px;">4</div>
<div class="a t" style="left:36px;top:104.8px;height:18px;line-height:18px;width:670px;overflow:hidden;"><span class="j">引数</span> 2: 'ref KeraLua.LuaDebug' <span class="j">から</span> 'ref KeraLua.LuaDebug' <span class="j">に変換できません</span></div>
<div class="a t" style="left:710px;top:104.8px;height:18px;line-height:18px;">LuaTests.cs</div>
<div class="a t" style="left:802px;top:104.8px;height:18px;line-height:18px;">2309</div>
<div class="a t" style="left:872px;top:104.8px;height:18px;line-height:18px;">37</div>
<div class="a t" style="left:942px;top:104.8px;height:18px;line-height:18px;">NLuaTest</div>
<svg class="a" style="left:0px;top:128.8px;" width="14" height="14" viewBox="0 0 14 14"><circle cx="7" cy="7" r="6.9" fill="#E41300"/><path d="M4.2 4.2 L9.8 9.8 M9.8 4.2 L4.2 9.8" stroke="#fff" stroke-width="2.1" stroke-linecap="round"/></svg>
<div class="a t" style="left:18px;top:126.8px;height:18px;line-height:18px;">5</div>
<div class="a t" style="left:36px;top:126.8px;height:18px;line-height:18px;width:670px;overflow:hidden;">'NLua.Lua.GetInfo(string, ref KeraLua.LuaDebug)' <span class="j">に最も適しているオーバーロード</span> <span class="j">メソッドには無効な引数がいくつか</span></div>
<div class="a t" style="left:710px;top:126.8px;height:18px;line-height:18px;">LuaTests.cs</div>
<div class="a t" style="left:802px;top:126.8px;height:18px;line-height:18px;">2310</div>
<div class="a t" style="left:872px;top:126.8px;height:18px;line-height:18px;">5</div>
<div class="a t" style="left:942px;top:126.8px;height:18px;line-height:18px;">NLuaTest</div>
<div class="a t" style="left:36px;top:144.8px;height:18px;line-height:18px;width:670px;overflow:hidden;"><span class="j">含まれています。</span></div>
<svg class="a" style="left:0px;top:168.8px;" width="14" height="14" viewBox="0 0 14 14"><circle cx="7" cy="7" r="6.9" fill="#E41300"/><path d="M4.2 4.2 L9.8 9.8 M9.8 4.2 L4.2 9.8" stroke="#fff" stroke-width="2.1" stroke-linecap="round"/></svg>
<div class="a t" style="left:18px;top:166.8px;height:18px;line-height:18px;">6</div>
<div class="a t" style="left:36px;top:166.8px;height:18px;line-height:18px;width:670px;overflow:hidden;"><span class="j">引数</span> 2: 'ref KeraLua.LuaDebug' <span class="j">から</span> 'ref KeraLua.LuaDebug' <span class="j">に変換できません</span></div>
<div class="a t" style="left:710px;top:166.8px;height:18px;line-height:18px;">LuaTests.cs</div>
<div class="a t" style="left:802px;top:166.8px;height:18px;line-height:18px;">2310</div>
<div class="a t" style="left:872px;top:166.8px;height:18px;line-height:18px;">31</div>
<div class="a t" style="left:942px;top:166.8px;height:18px;line-height:18px;">NLuaTest</div>
</div>
<div class="a " style="left:1100px;top:705px;width:17px;height:206px;background:#E8E8EC;"></div>
<svg class="a" style="left:1104px;top:711.6px;" width="9" height="5" viewBox="0 0 9 5"><path d="M0 5 L4.5 0 L9 5 Z" fill="#86868A"/></svg>
<div class="a " style="left:1104px;top:755px;width:9px;height:156px;background:#C8C9D0;"></div>
<div class="a " style="left:1123px;top:94px;width:362px;height:24px;background:#007ACC;"></div>
<div class="a t " style="left:1128px;top:96.5px;height:18px;line-height:18px;color:#FFFFFF;"><span class="j">ソリューション</span> <span class="j">エクスプローラー</span></div>
<svg class="a" style="left:1319px;top:103px;" width="102" height="5" viewBox="0 0 102 5"><rect width="102" height="5" fill="url(#pb)"/></svg>
<svg class="a" style="left:1430px;top:103.9px;" width="8" height="4.2" viewBox="0 0 8 4.2"><path d="M0 0 H8 L4 4.2 Z" fill="#FFFFFF"/></svg>
<svg class="a" style="left:1448px;top:99.5px;" width="9" height="12" viewBox="0 0 9 12"><path d="M2 0.6 H7 M2.5 0.6 V6.5 M6 0.6 V6.5 M6.8 0.6 V6.5 M0.9 6.5 H8.1 M4.5 6.5 V11.2" stroke="#FFFFFF" stroke-width="1.1" fill="none"/></svg>
<svg class="a" style="left:1467px;top:100.5px;" width="10" height="10" viewBox="0 0 10 10"><path d="M1 1 L9 9 M9 1 L1 9" stroke="#FFFFFF" stroke-width="1.6"/></svg>
<svg class="a" style="left:1132px;top:126px;" width="12" height="12" viewBox="0 0 12 12"><circle cx="6" cy="6" r="6" fill="#C6C6CA"/><path d="M9.6 6 H3.6 M6 3.2 L3.2 6 L6 8.8" stroke="#F4F4F6" stroke-width="1.8" fill="none"/></svg>
<svg class="a" style="left:1154px;top:126px;" width="12" height="12" viewBox="0 0 12 12"><circle cx="6" cy="6" r="6" fill="#C6C6CA"/><path d="M2.4 6 H8.4 M6 3.2 L8.8 6 L6 8.8" stroke="#F4F4F6" stroke-width="1.8" fill="none"/></svg>
<svg class="a" style="left:1174px;top:124px;" width="16" height="16" viewBox="0 0 16 16"><path d="M1.4 8.4 L8 1.7 L14.6 8.4" fill="none" stroke="#2E2E2E" stroke-width="1.5"/><path d="M2.9 7.4 V14.4 H13.1 V7.4" fill="none" stroke="#2E2E2E" stroke-width="1.4"/><rect x="6.5" y="9.4" width="3" height="5" fill="#2E2E2E"/><path d="M11 1 V4.4" stroke="#2E2E2E" stroke-width="1.2"/></svg>
<div class="a " style="left:1196px;top:122px;width:1px;height:20px;background:#CCCEDB;"></div>
<svg class="a" style="left:1206px;top:124px;" width="16" height="15" viewBox="0 0 16 15"><circle cx="9" cy="8.6" r="4.4" fill="none" stroke="#2E2E2E" stroke-width="1.8"/><path d="M9 6.4 V9 H11.2" stroke="#2E2E2E" stroke-width="1.1" fill="none"/><path d="M1 1 H6 L3.5 3.6 Z" fill="#2E2E2E"/><path d="M3.5 3 L5.6 5.6" stroke="#2E2E2E" stroke-width="1.1"/></svg>
<svg class="a" style="left:1227px;top:131px;" width="5.5" height="3" viewBox="0 0 5.5 3"><path d="M0 0 H5.5 L2.75 3 Z" fill="#6D6D6D"/></svg>
<svg class="a" style="left:1240px;top:125px;" width="14" height="13" viewBox="0 0 14 13"><path d="M2.4 4 H12.4 M9.2 0.8 L12.6 4 L9.2 7.2" stroke="#2E2E2E" stroke-width="1.8" fill="none"/><path d="M11.6 9 H1.6 M4.8 5.8 L1.4 9 L4.8 12.2" stroke="#2E2E2E" stroke-width="1.8" fill="none"/></svg>
<svg class="a" style="left:1262px;top:125px;" width="14" height="14" viewBox="0 0 14 14"><path d="M4.6 11.4 A5 5 0 0 1 5 2.2" fill="none" stroke="#2E2E2E" stroke-width="2.4"/><path d="M9.4 2.2 A5 5 0 0 1 9 11.4" fill="none" stroke="#2E2E2E" stroke-width="2.4"/><path d="M3.6 0.4 L8.4 1.6 L4.6 5 Z M10.4 13.2 L5.6 12 L9.4 8.6 Z" fill="#2E2E2E"/></svg>
<svg class="a" style="left:1284px;top:124px;" width="15" height="15" viewBox="0 0 15 15"><path d="M4.5 3.5 V1 H13.6 V9.6 H11.4 M2.6 5 V3 H11.6 V11.4 H10" fill="none" stroke="#2E2E2E" stroke-width="1"/><rect x="1.4" y="5.4" width="8.6" height="7.8" fill="#F5F5F5" stroke="#2E2E2E" stroke-width="1.6"/><path d="M4 9.4 H7.4" stroke="#0E62B4" stroke-width="1.3"/></svg>
<svg class="a" style="left:1305px;top:124px;" width="15" height="16" viewBox="0 0 15 16"><path d="M0.5 0.5 H6 M0.5 0.5 V9.5" stroke="#444" stroke-width="1" stroke-dasharray="1 1" fill="none"/><path d="M6.5 3 H10.4 L13.4 6 V12 H11.6" fill="none" stroke="#2E2E2E" stroke-width="1.1"/><path d="M4.2 4.6 H9 L11.6 7.2 V14.6 H4.2 Z" fill="#F5F5F5" stroke="#2E2E2E" stroke-width="1.3"/><path d="M6 9 H9.8 M6 10.8 H9.8 M6 12.6 H9.8" stroke="#2E2E2E" stroke-width="0.9"/></svg>
<div class="a " style="left:1327px;top:122px;width:1px;height:20px;background:#CCCEDB;"></div>
<svg class="a" style="left:1337px;top:125.6px;" width="12.6" height="12.6" viewBox="0 0 13 13"><path d="M7.2 5.8 L1.9 11.1" stroke="#2E2E2E" stroke-width="2.9" stroke-linecap="round"/><circle cx="8.7" cy="4.3" r="3.9" fill="#2E2E2E"/><path d="M9.3 3.7 L13.5 -0.5" stroke="#EFEFF2" stroke-width="2.7"/></svg>
<svg class="a" style="left:1357px;top:124px;" width="17" height="16" viewBox="0 0 17 16"><path d="M1.6 7 V1.2 H6.6 L8 2.6 H14.6 V12.2 H8.6" fill="none" stroke="#2E2E2E" stroke-width="1.5"/><path d="M8.4 2.4 H14.4" stroke="#2E2E2E" stroke-width="1"/><circle cx="5.4" cy="10.6" r="2.5" fill="#F5F5F5" stroke="#1565B8" stroke-width="1.3"/><path d="M3.6 12.4 L0.8 15" stroke="#1565B8" stroke-width="1.7"/></svg>
<div class="a " style="left:1123px;top:146px;width:362px;height:24px;background:#FCFCFC;"></div>
<div class="a t " style="left:1128px;top:149px;height:18px;line-height:18px;color:#6D6D6D;"><span class="j">ソリューション</span> <span class="j">エクスプローラー</span> <span class="j">の検索</span> (Ctrl+:)</div>
<svg class="a" style="left:1456px;top:151px;" width="14" height="14" viewBox="0 0 14 14"><circle cx="9" cy="5" r="3.2" fill="none" stroke="#717171" stroke-width="1.7"/><path d="M6.8 7.4 L2 12.2" stroke="#717171" stroke-width="2.2" stroke-linecap="round"/></svg>
<svg class="a" style="left:1474px;top:156px;" width="6" height="3" viewBox="0 0 6 3"><path d="M0 0 H6 L3 3 Z" fill="#6D6D6D"/></svg>
<div class="a " style="left:1123px;top:172px;width:345px;height:586px;background:#F5F5F5;"></div>
<div class="a " style="left:1468px;top:172px;width:17px;height:586px;background:#E8E8EC;"></div>
<svg class="a" style="left:1472px;top:179px;" width="9" height="5" viewBox="0 0 9 5"><path d="M0 5 L4.5 0 L9 5 Z" fill="#86868A"/></svg>
<div class="a " style="left:1472px;top:420px;width:9px;height:266px;background:#C8C9D0;"></div>
<svg class="a" style="left:1472px;top:746px;" width="9" height="5" viewBox="0 0 9 5"><path d="M0 0 L4.5 5 L9 0 Z" fill="#86868A"/></svg>
<svg class="a" style="left:1170px;top:179.2px;" width="6" height="11" viewBox="0 0 6 11"><path d="M0.6 0.9 L4.9 5.5 L0.6 10.1 Z" fill="none" stroke="#1E1E1E" stroke-width="1.05"/></svg>
<svg class="a" style="left:1191px;top:180.8px;" width="14" height="8" viewBox="0 0 14 8"><path d="M5.6 1.6 A2.7 2.7 0 1 0 5.6 5.6" fill="none" stroke="#388A34" stroke-width="2"/><path d="M8.3 0.2 V5.4 M10.3 0.2 V5.4 M6.9 1.8 H11.8 M6.9 3.8 H11.8" stroke="#388A34" stroke-width="1.15" fill="none"/></svg>
<div class="a t " style="left:1210px;top:175.5px;height:18px;line-height:18px;color:#1E1E1E;">ObjectTranslator.cs</div>
<svg class="a" style="left:1170px;top:199.2px;" width="6" height="11" viewBox="0 0 6 11"><path d="M0.6 0.9 L4.9 5.5 L0.6 10.1 Z" fill="none" stroke="#1E1E1E" stroke-width="1.05"/></svg>
<svg class="a" style="left:1191px;top:200.8px;" width="14" height="8" viewBox="0 0 14 8"><path d="M5.6 1.6 A2.7 2.7 0 1 0 5.6 5.6" fill="none" stroke="#388A34" stroke-width="2"/><path d="M8.3 0.2 V5.4 M10.3 0.2 V5.4 M6.9 1.8 H11.8 M6.9 3.8 H11.8" stroke="#388A34" stroke-width="1.15" fill="none"/></svg>
<div class="a t " style="left:1210px;top:195.5px;height:18px;line-height:18px;color:#1E1E1E;">ObjectTranslatorPool.cs</div>
<svg class="a" style="left:1170px;top:219.2px;" width="6" height="11" viewBox="0 0 6 11"><path d="M0.6 0.9 L4.9 5.5 L0.6 10.1 Z" fill="none" stroke="#1E1E1E" stroke-width="1.05"/></svg>
<svg class="a" style="left:1191px;top:220.8px;" width="14" height="8" viewBox="0 0 14 8"><path d="M5.6 1.6 A2.7 2.7 0 1 0 5.6 5.6" fill="none" stroke="#388A34" stroke-width="2"/><path d="M8.3 0.2 V5.4 M10.3 0.2 V5.4 M6.9 1.8 H11.8 M6.9 3.8 H11.8" stroke="#388A34" stroke-width="1.15" fill="none"/></svg>
<div class="a t " style="left:1210px;top:215.5px;height:18px;line-height:18px;color:#1E1E1E;">ProxyType.cs</div>
<svg class="a" style="left:1133.4px;top:241.8px;" width="7" height="7" viewBox="0 0 7 7"><path d="M7 0 V6.6 H0.2 Z" fill="#1E1E1E"/></svg>
<svg class="a" style="left:1154px;top:237.8px;" width="14.2" height="13.2" viewBox="0 0 14.2 13.2"><path d="M2.9 6.4 V3.5 L9.2 0.7 H13.5 V12.6" fill="none" stroke="#3A3A3A" stroke-width="1.2"/><path d="M10.3 2.5 H12" stroke="#3A3A3A" stroke-width="0.9"/><path d="M0 6.5 H11.3 L13.4 13 H1.5 Z" fill="#3A3A3A"/></svg>
<div class="a t " style="left:1174px;top:235.5px;height:18px;line-height:18px;color:#1E1E1E;">Test</div>
<svg class="a" style="left:1151.4px;top:261.8px;" width="7" height="7" viewBox="0 0 7 7"><path d="M7 0 V6.6 H0.2 Z" fill="#1E1E1E"/></svg>
<svg class="a" style="left:1172px;top:259px;" width="14" height="12" viewBox="0 0 14 12"><rect x="0.6" y="0.6" width="12.8" height="10.8" fill="#FDFDFD" stroke="#388A34" stroke-width="1.2"/><path d="M6.2 4.3 A2 2 0 1 0 6.2 7.7" fill="none" stroke="#2E2E2E" stroke-width="1.4"/><path d="M8.5 3.4 V8.4 M10.3 3.4 V8.4 M7.3 5 H11.6 M7.3 6.9 H11.6" stroke="#2E2E2E" stroke-width="0.95" fill="none"/></svg>
<div class="a t " style="left:1192px;top:255.5px;height:18px;line-height:18px;color:#1E1E1E;font-weight:bold;">ConsoleTest</div>
<svg class="a" style="left:1170px;top:279.2px;" width="6" height="11" viewBox="0 0 6 11"><path d="M0.6 0.9 L4.9 5.5 L0.6 10.1 Z" fill="none" stroke="#1E1E1E" stroke-width="1.05"/></svg>
<svg class="a" style="left:1191.6px;top:278.4px;" width="12" height="12" viewBox="0 0 13 13"><path d="M7.2 5.8 L1.9 11.1" stroke="#3A3A3A" stroke-width="2.9" stroke-linecap="round"/><circle cx="8.7" cy="4.3" r="3.9" fill="#3A3A3A"/><path d="M9.3 3.7 L13.5 -0.5" stroke="#F5F5F5" stroke-width="2.7"/></svg>
<div class="a t " style="left:1210px;top:275.5px;height:18px;line-height:18px;color:#1E1E1E;">Properties</div>
<svg class="a" style="left:1170px;top:299.2px;" width="6" height="11" viewBox="0 0 6 11"><path d="M0.6 0.9 L4.9 5.5 L0.6 10.1 Z" fill="none" stroke="#1E1E1E" stroke-width="1.05"/></svg>
<svg class="a" style="left:1190px;top:301.2px;" width="14.2" height="7" viewBox="0 0 14.2 7"><rect x="0" y="1" width="3.7" height="5" fill="#3A3A3A"/><rect x="5.3" y="2.9" width="1.5" height="1.2" fill="#3A3A3A"/><rect x="8.3" y="0" width="5.8" height="6.6" fill="#3A3A3A"/></svg>
<div class="a t " style="left:1210px;top:295.5px;height:18px;line-height:18px;color:#1E1E1E;"><span class="j">参照設定</span></div>
<svg class="a" style="left:1191px;top:317.7px;" width="13.5" height="13.4" viewBox="0 0 13.5 13.4"><path d="M3.2 4 V0.8 H9.3 L12.5 4 V11.2 H5.4" fill="#EFEFF2" stroke="#3A3A3A" stroke-width="1.5"/><path d="M9 1 V4.3 H12.3" fill="none" stroke="#3A3A3A" stroke-width="1"/><path d="M0.9 4.8 V7 C0.9 8.6 4.9 8.6 4.9 7 V4.8 M2.9 8 V13" fill="none" stroke="#3A3A3A" stroke-width="1.5"/></svg>
<div class="a t " style="left:1210px;top:315.5px;height:18px;line-height:18px;color:#1E1E1E;">App.config</div>
<svg class="a" style="left:1170px;top:339.2px;" width="6" height="11" viewBox="0 0 6 11"><path d="M0.6 0.9 L4.9 5.5 L0.6 10.1 Z" fill="none" stroke="#1E1E1E" stroke-width="1.05"/></svg>
<svg class="a" style="left:1191px;top:341px;" width="14" height="12" viewBox="0 0 14 12"><path d="M5.6 1.6 A2.7 2.7 0 1 0 5.6 5.6" fill="none" stroke="#388A34" stroke-width="2"/><path d="M8.3 0.2 V5.4 M10.3 0.2 V5.4 M6.9 1.8 H11.8 M6.9 3.8 H11.8" stroke="#388A34" stroke-width="1.15" fill="none"/><rect x="5.9" y="3.9" width="6.6" height="6.6" fill="#FFFFFF" stroke="#1BA1E2" stroke-width="1.1"/><path d="M7.6 5.6 H10.8 V8.8 M10.6 5.8 L7.6 8.8" stroke="#1BA1E2" stroke-width="1.1" fill="none"/></svg>
<div class="a t " style="left:1210px;top:335.5px;height:18px;line-height:18px;color:#1E1E1E;">Entity.cs</div>
<svg class="a" style="left:1170px;top:359.2px;" width="6" height="11" viewBox="0 0 6 11"><path d="M0.6 0.9 L4.9 5.5 L0.6 10.1 Z" fill="none" stroke="#1E1E1E" stroke-width="1.05"/></svg>
<svg class="a" style="left:1191px;top:360.8px;" width="14" height="8" viewBox="0 0 14 8"><path d="M5.6 1.6 A2.7 2.7 0 1 0 5.6 5.6" fill="none" stroke="#388A34" stroke-width="2"/><path d="M8.3 0.2 V5.4 M10.3 0.2 V5.4 M6.9 1.8 H11.8 M6.9 3.8 H11.8" stroke="#388A34" stroke-width="1.15" fill="none"/></svg>
<div class="a t " style="left:1210px;top:355.5px;height:18px;line-height:18px;color:#1E1E1E;">Program.cs</div>
<svg class="a" style="left:1151.4px;top:381.8px;" width="7" height="7" viewBox="0 0 7 7"><path d="M7 0 V6.6 H0.2 Z" fill="#1E1E1E"/></svg>
<svg class="a" style="left:1172px;top:379px;" width="14" height="12" viewBox="0 0 14 12"><rect x="0.6" y="0.6" width="12.8" height="10.8" fill="#FDFDFD" stroke="#388A34" stroke-width="1.2"/><path d="M6.2 4.3 A2 2 0 1 0 6.2 7.7" fill="none" stroke="#2E2E2E" stroke-width="1.4"/><path d="M8.5 3.4 V8.4 M10.3 3.4 V8.4 M7.3 5 H11.6 M7.3 6.9 H11.6" stroke="#2E2E2E" stroke-width="0.95" fill="none"/></svg>
<div class="a t " style="left:1192px;top:375.5px;height:18px;line-height:18px;color:#1E1E1E;">NLuaTest</div>
<svg class="a" style="left:1170px;top:399.2px;" width="6" height="11" viewBox="0 0 6 11"><path d="M0.6 0.9 L4.9 5.5 L0.6 10.1 Z" fill="none" stroke="#1E1E1E" stroke-width="1.05"/></svg>
<svg class="a" style="left:1191.6px;top:398.4px;" width="12" height="12" viewBox="0 0 13 13"><path d="M7.2 5.8 L1.9 11.1" stroke="#3A3A3A" stroke-width="2.9" stroke-linecap="round"/><circle cx="8.7" cy="4.3" r="3.9" fill="#3A3A3A"/><path d="M9.3 3.7 L13.5 -0.5" stroke="#F5F5F5" stroke-width="2.7"/></svg>
<div class="a t " style="left:1210px;top:395.5px;height:18px;line-height:18px;color:#1E1E1E;">Properties</div>
<svg class="a" style="left:1170px;top:419.2px;" width="6" height="11" viewBox="0 0 6 11"><path d="M0.6 0.9 L4.9 5.5 L0.6 10.1 Z" fill="none" stroke="#1E1E1E" stroke-width="1.05"/></svg>
<svg class="a" style="left:1190px;top:421.2px;" width="14.2" height="7" viewBox="0 0 14.2 7"><rect x="0" y="1" width="3.7" height="5" fill="#3A3A3A"/><rect x="5.3" y="2.9" width="1.5" height="1.2" fill="#3A3A3A"/><rect x="8.3" y="0" width="5.8" height="6.6" fill="#3A3A3A"/></svg>
<div class="a t " style="left:1210px;top:415.5px;height:18px;line-height:18px;color:#1E1E1E;"><span class="j">参照設定</span></div>
<svg class="a" style="left:1170px;top:439.2px;" width="6" height="11" viewBox="0 0 6 11"><path d="M0.6 0.9 L4.9 5.5 L0.6 10.1 Z" fill="none" stroke="#1E1E1E" stroke-width="1.05"/></svg>
<svg class="a" style="left:1191px;top:440.8px;" width="14" height="8" viewBox="0 0 14 8"><path d="M5.6 1.6 A2.7 2.7 0 1 0 5.6 5.6" fill="none" stroke="#388A34" stroke-width="2"/><path d="M8.3 0.2 V5.4 M10.3 0.2 V5.4 M6.9 1.8 H11.8 M6.9 3.8 H11.8" stroke="#388A34" stroke-width="1.15" fill="none"/></svg>
<div class="a t " style="left:1210px;top:435.5px;height:18px;line-height:18px;color:#1E1E1E;">AAACodeGenTests.cs</div>
<svg class="a" style="left:1170px;top:459.2px;" width="6" height="11" viewBox="0 0 6 11"><path d="M0.6 0.9 L4.9 5.5 L0.6 10.1 Z" fill="none" stroke="#1E1E1E" stroke-width="1.05"/></svg>
<svg class="a" style="left:1191px;top:461px;" width="14" height="12" viewBox="0 0 14 12"><path d="M5.6 1.6 A2.7 2.7 0 1 0 5.6 5.6" fill="none" stroke="#388A34" stroke-width="2"/><path d="M8.3 0.2 V5.4 M10.3 0.2 V5.4 M6.9 1.8 H11.8 M6.9 3.8 H11.8" stroke="#388A34" stroke-width="1.15" fill="none"/><rect x="5.9" y="3.9" width="6.6" height="6.6" fill="#FFFFFF" stroke="#1BA1E2" stroke-width="1.1"/><path d="M7.6 5.6 H10.8 V8.8 M10.6 5.8 L7.6 8.8" stroke="#1BA1E2" stroke-width="1.1" fill="none"/></svg>
<div class="a t " style="left:1210px;top:455.5px;height:18px;line-height:18px;color:#1E1E1E;">Core.cs</div>
<svg class="a" style="left:1170px;top:479.2px;" width="6" height="11" viewBox="0 0 6 11"><path d="M0.6 0.9 L4.9 5.5 L0.6 10.1 Z" fill="none" stroke="#1E1E1E" stroke-width="1.05"/></svg>
<svg class="a" style="left:1191px;top:481px;" width="14" height="12" viewBox="0 0 14 12"><path d="M5.6 1.6 A2.7 2.7 0 1 0 5.6 5.6" fill="none" stroke="#388A34" stroke-width="2"/><path d="M8.3 0.2 V5.4 M10.3 0.2 V5.4 M6.9 1.8 H11.8 M6.9 3.8 H11.8" stroke="#388A34" stroke-width="1.15" fill="none"/><rect x="5.9" y="3.9" width="6.6" height="6.6" fill="#FFFFFF" stroke="#1BA1E2" stroke-width="1.1"/><path d="M7.6 5.6 H10.8 V8.8 M10.6 5.8 L7.6 8.8" stroke="#1BA1E2" stroke-width="1.1" fill="none"/></svg>
<div class="a t " style="left:1210px;top:475.5px;height:18px;line-height:18px;color:#1E1E1E;">Entity.cs</div>
<svg class="a" style="left:1170px;top:499.2px;" width="6" height="11" viewBox="0 0 6 11"><path d="M0.6 0.9 L4.9 5.5 L0.6 10.1 Z" fill="none" stroke="#1E1E1E" stroke-width="1.05"/></svg>
<svg class="a" style="left:1191px;top:500.8px;" width="14" height="8" viewBox="0 0 14 8"><path d="M5.6 1.6 A2.7 2.7 0 1 0 5.6 5.6" fill="none" stroke="#388A34" stroke-width="2"/><path d="M8.3 0.2 V5.4 M10.3 0.2 V5.4 M6.9 1.8 H11.8 M6.9 3.8 H11.8" stroke="#388A34" stroke-width="1.15" fill="none"/></svg>
<div class="a t " style="left:1210px;top:495.5px;height:18px;line-height:18px;color:#1E1E1E;">LoadFileTests.cs</div>
<svg class="a" style="left:1170px;top:519.2px;" width="6" height="11" viewBox="0 0 6 11"><path d="M0.6 0.9 L4.9 5.5 L0.6 10.1 Z" fill="none" stroke="#1E1E1E" stroke-width="1.05"/></svg>
<svg class="a" style="left:1191px;top:521px;" width="14" height="12" viewBox="0 0 14 12"><path d="M5.6 1.6 A2.7 2.7 0 1 0 5.6 5.6" fill="none" stroke="#388A34" stroke-width="2"/><path d="M8.3 0.2 V5.4 M10.3 0.2 V5.4 M6.9 1.8 H11.8 M6.9 3.8 H11.8" stroke="#388A34" stroke-width="1.15" fill="none"/><rect x="5.9" y="3.9" width="6.6" height="6.6" fill="#FFFFFF" stroke="#1BA1E2" stroke-width="1.1"/><path d="M7.6 5.6 H10.8 V8.8 M10.6 5.8 L7.6 8.8" stroke="#1BA1E2" stroke-width="1.1" fill="none"/></svg>
<div class="a t " style="left:1210px;top:515.5px;height:18px;line-height:18px;color:#1E1E1E;">LuaTests.cs</div>
<svg class="a" style="left:1191px;top:537.7px;" width="13.5" height="13.4" viewBox="0 0 13.5 13.4"><path d="M3.2 4 V0.8 H9.3 L12.5 4 V11.2 H5.4" fill="#EFEFF2" stroke="#3A3A3A" stroke-width="1.5"/><path d="M9 1 V4.3 H12.3" fill="none" stroke="#3A3A3A" stroke-width="1"/><path d="M0.9 4.8 V7 C0.9 8.6 4.9 8.6 4.9 7 V4.8 M2.9 8 V13" fill="none" stroke="#3A3A3A" stroke-width="1.5"/></svg>
<div class="a t " style="left:1210px;top:535.5px;height:18px;line-height:18px;color:#1E1E1E;">packages.config</div>
<svg class="a" style="left:1170px;top:559.2px;" width="6" height="11" viewBox="0 0 6 11"><path d="M0.6 0.9 L4.9 5.5 L0.6 10.1 Z" fill="none" stroke="#1E1E1E" stroke-width="1.05"/></svg>
<svg class="a" style="left:1191px;top:561px;" width="14" height="12" viewBox="0 0 14 12"><path d="M5.6 1.6 A2.7 2.7 0 1 0 5.6 5.6" fill="none" stroke="#388A34" stroke-width="2"/><path d="M8.3 0.2 V5.4 M10.3 0.2 V5.4 M6.9 1.8 H11.8 M6.9 3.8 H11.8" stroke="#388A34" stroke-width="1.15" fill="none"/><rect x="5.9" y="3.9" width="6.6" height="6.6" fill="#FFFFFF" stroke="#1BA1E2" stroke-width="1.1"/><path d="M7.6 5.6 H10.8 V8.8 M10.6 5.8 L7.6 8.8" stroke="#1BA1E2" stroke-width="1.1" fill="none"/></svg>
<div class="a t " style="left:1210px;top:555.5px;height:18px;line-height:18px;color:#1E1E1E;">TestLua.cs</div>
<svg class="a" style="left:1133.4px;top:581.8px;" width="7" height="7" viewBox="0 0 7 7"><path d="M7 0 V6.6 H0.2 Z" fill="#1E1E1E"/></svg>
<svg class="a" style="left:1154px;top:579px;" width="14" height="12" viewBox="0 0 14 12"><rect x="0.6" y="0.6" width="12.8" height="10.8" fill="#FDFDFD" stroke="#388A34" stroke-width="1.2"/><path d="M6.2 4.3 A2 2 0 1 0 6.2 7.7" fill="none" stroke="#2E2E2E" stroke-width="1.4"/><path d="M8.5 3.4 V8.4 M10.3 3.4 V8.4 M7.3 5 H11.6 M7.3 6.9 H11.6" stroke="#2E2E2E" stroke-width="0.95" fill="none"/></svg>
<div class="a t " style="left:1174px;top:575.5px;height:18px;line-height:18px;color:#1E1E1E;">KeraLua.Net45</div>
<svg class="a" style="left:1151.4px;top:601.8px;" width="7" height="7" viewBox="0 0 7 7"><path d="M7 0 V6.6 H0.2 Z" fill="#1E1E1E"/></svg>
<svg class="a" style="left:1172px;top:597.8px;" width="14.2" height="13.2" viewBox="0 0 14.2 13.2"><path d="M2.9 6.4 V3.5 L9.2 0.7 H13.5 V12.6" fill="none" stroke="#3A3A3A" stroke-width="1.2"/><path d="M10.3 2.5 H12" stroke="#3A3A3A" stroke-width="0.9"/><path d="M0 6.5 H11.3 L13.4 13 H1.5 Z" fill="#3A3A3A"/></svg>
<div class="a t " style="left:1192px;top:595.5px;height:18px;line-height:18px;color:#1E1E1E;"><span class="j">参照設定</span></div>
<svg class="a" style="left:1190px;top:621.2px;" width="14.2" height="7" viewBox="0 0 14.2 7"><rect x="0" y="1" width="3.7" height="5" fill="#3A3A3A"/><rect x="5.3" y="2.9" width="1.5" height="1.2" fill="#3A3A3A"/><rect x="8.3" y="0" width="5.8" height="6.6" fill="#3A3A3A"/></svg>
<div class="a t " style="left:1210px;top:615.5px;height:18px;line-height:18px;color:#1E1E1E;">System</div>
<svg class="a" style="left:1190px;top:641.2px;" width="14.2" height="7" viewBox="0 0 14.2 7"><rect x="0" y="1" width="3.7" height="5" fill="#3A3A3A"/><rect x="5.3" y="2.9" width="1.5" height="1.2" fill="#3A3A3A"/><rect x="8.3" y="0" width="5.8" height="6.6" fill="#3A3A3A"/></svg>
<div class="a t " style="left:1210px;top:635.5px;height:18px;line-height:18px;color:#1E1E1E;">System.Core</div>
<svg class="a" style="left:1151.4px;top:661.8px;" width="7" height="7" viewBox="0 0 7 7"><path d="M7 0 V6.6 H0.2 Z" fill="#1E1E1E"/></svg>
<svg class="a" style="left:1172px;top:657.8px;" width="14.2" height="13.2" viewBox="0 0 14.2 13.2"><path d="M2.9 6.4 V3.5 L9.2 0.7 H13.5 V12.6" fill="none" stroke="#3A3A3A" stroke-width="1.2"/><path d="M10.3 2.5 H12" stroke="#3A3A3A" stroke-width="0.9"/><path d="M0 6.5 H11.3 L13.4 13 H1.5 Z" fill="#3A3A3A"/></svg>
<div class="a t " style="left:1192px;top:655.5px;height:18px;line-height:18px;color:#1E1E1E;">KeraLua</div>
<svg class="a" style="left:1170px;top:679.2px;" width="6" height="11" viewBox="0 0 6 11"><path d="M0.6 0.9 L4.9 5.5 L0.6 10.1 Z" fill="none" stroke="#1E1E1E" stroke-width="1.05"/></svg>
<svg class="a" style="left:1190px;top:677.8px;" width="14.2" height="13" viewBox="0 0 14.2 13"><path d="M0.6 6 V3.3 H5.6 L8.8 0.7 H13.5 V6" fill="#FDFDFD" stroke="#3A3A3A" stroke-width="1.2"/><path d="M10.4 2.5 H12" stroke="#3A3A3A" stroke-width="0.9"/><rect x="0" y="5.6" width="14.1" height="7.3" fill="#3A3A3A"/></svg>
<div class="a t " style="left:1210px;top:675.5px;height:18px;line-height:18px;color:#1E1E1E;">Platform</div>
<svg class="a" style="left:1170px;top:699.2px;" width="6" height="11" viewBox="0 0 6 11"><path d="M0.6 0.9 L4.9 5.5 L0.6 10.1 Z" fill="none" stroke="#1E1E1E" stroke-width="1.05"/></svg>
<svg class="a" style="left:1190px;top:697.8px;" width="14.2" height="13" viewBox="0 0 14.2 13"><path d="M0.6 6 V3.3 H5.6 L8.8 0.7 H13.5 V6" fill="#FDFDFD" stroke="#3A3A3A" stroke-width="1.2"/><path d="M10.4 2.5 H12" stroke="#3A3A3A" stroke-width="0.9"/><rect x="0" y="5.6" width="14.1" height="7.3" fill="#3A3A3A"/></svg>
<div class="a t " style="left:1210px;top:695.5px;height:18px;line-height:18px;color:#1E1E1E;">Properties</div>
<svg class="a" style="left:1170px;top:719.2px;" width="6" height="11" viewBox="0 0 6 11"><path d="M0.6 0.9 L4.9 5.5 L0.6 10.1 Z" fill="none" stroke="#1E1E1E" stroke-width="1.05"/></svg>
<svg class="a" style="left:1191px;top:720.8px;" width="14" height="8" viewBox="0 0 14 8"><path d="M5.6 1.6 A2.7 2.7 0 1 0 5.6 5.6" fill="none" stroke="#388A34" stroke-width="2"/><path d="M8.3 0.2 V5.4 M10.3 0.2 V5.4 M6.9 1.8 H11.8 M6.9 3.8 H11.8" stroke="#388A34" stroke-width="1.15" fill="none"/></svg>
<div class="a t " style="left:1210px;top:715.5px;height:18px;line-height:18px;color:#1E1E1E;">CharPtr.cs</div>
<svg class="a" style="left:1170px;top:739.2px;" width="6" height="11" viewBox="0 0 6 11"><path d="M0.6 0.9 L4.9 5.5 L0.6 10.1 Z" fill="none" stroke="#1E1E1E" stroke-width="1.05"/></svg>
<svg class="a" style="left:1191px;top:740.8px;" width="14" height="8" viewBox="0 0 14 8"><path d="M5.6 1.6 A2.7 2.7 0 1 0 5.6 5.6" fill="none" stroke="#388A34" stroke-width="2"/><path d="M8.3 0.2 V5.4 M10.3 0.2 V5.4 M6.9 1.8 H11.8 M6.9 3.8 H11.8" stroke="#388A34" stroke-width="1.15" fill="none"/></svg>
<div class="a t " style="left:1210px;top:735.5px;height:18px;line-height:18px;color:#1E1E1E;">DynamicLibraryPath.cs</div>
<svg class="a" style="left:1159.6px;top:282.6px;" width="147.8" height="47.4" viewBox="0 0 147.8 47.4"><ellipse cx="73.9" cy="23.7" rx="67.9" ry="17.7" fill="none" stroke="#ED1C24" stroke-width="5.3" transform="rotate(0 73.9 23.7)"/></svg>
<svg class="a" style="left:1162.5px;top:403.5px;" width="141.8" height="48.2" viewBox="0 0 141.8 48.2"><ellipse cx="70.9" cy="24.1" rx="64.9" ry="18.1" fill="none" stroke="#ED1C24" stroke-width="5.3" transform="rotate(0 70.9 24.1)"/></svg>
<svg class="a" style="left:1126.9px;top:581.6px;" width="160.4" height="46" viewBox="0 0 160.4 46"><ellipse cx="80.2" cy="23" rx="74.2" ry="17" fill="none" stroke="#ED1C24" stroke-width="5.3" transform="rotate(0 80.2 23)"/></svg>
<div class="a " style="left:1123px;top:758px;width:362px;height:6px;background:#CCCEDB;"></div>
<div class="a t " style="left:1127px;top:765.7px;height:18px;line-height:18px;color:#444;"><span class="j">プロパティ</span></div>
<svg class="a" style="left:1195px;top:773px;" width="226" height="5" viewBox="0 0 226 5"><rect width="226" height="5" fill="url(#pg)"/></svg>
<svg class="a" style="left:1430px;top:773.9px;" width="8" height="4.2" viewBox="0 0 8 4.2"><path d="M0 0 H8 L4 4.2 Z" fill="#1E1E1E"/></svg>
<svg class="a" style="left:1448px;top:769.5px;" width="9" height="12" viewBox="0 0 9 12"><path d="M2 0.6 H7 M2.5 0.6 V6.5 M6 0.6 V6.5 M6.8 0.6 V6.5 M0.9 6.5 H8.1 M4.5 6.5 V11.2" stroke="#1E1E1E" stroke-width="1.1" fill="none"/></svg>
<svg class="a" style="left:1467px;top:770.5px;" width="10" height="10" viewBox="0 0 10 10"><path d="M1 1 L9 9 M9 1 L1 9" stroke="#1E1E1E" stroke-width="1.6"/></svg>
<div class="a " style="left:1123px;top:788px;width:362px;height:26.5px;background:#FCFCFC;"></div>
<svg class="a" style="left:1474px;top:800px;" width="6" height="3" viewBox="0 0 6 3"><path d="M0 0 H6 L3 3 Z" fill="#6D6D6D"/></svg>
<div class="a " style="left:1123px;top:840.6px;width:362px;height:71px;background:#F5F5F5;"></div>
<div class="a " style="left:1126px;top:816px;width:23px;height:22.3px;background:#FDFDFF;border:1px solid #3399FF;"></div>
<svg class="a" style="left:1129px;top:819px;" width="17" height="17" viewBox="0 0 17 17"><rect x="1" y="1" width="5" height="5" fill="#2E2E2E"/><path d="M2.2 3.5 H4.8 M3.5 2.2 V4.8" stroke="#fff" stroke-width="1"/><path d="M7.5 1.5 H13 M7.5 3.5 H13 M7.5 5.5 H13" stroke="#2E2E2E" stroke-width="1"/><path d="M13.5 3.5 H15 M13.5 5.5 H15" stroke="#2E2E2E" stroke-width="1" stroke-dasharray="1 1"/><rect x="13" y="0.6" width="3" height="1.6" fill="#FF1EE6"/><rect x="1" y="10" width="5" height="5" fill="#2E2E2E"/><path d="M2.2 12.5 H4.8 M3.5 11.2 V13.8" stroke="#fff" stroke-width="1"/><path d="M7.5 10.5 H13 M7.5 12.5 H13 M7.5 14.5 H13" stroke="#2E2E2E" stroke-width="1"/><path d="M13.5 12.5 H15 M13.5 14.5 H15" stroke="#2E2E2E" stroke-width="1" stroke-dasharray="1 1"/><rect x="13" y="9.6" width="3" height="1.6" fill="#FF1EE6"/><path d="M0 8 H6" stroke="#FF1EE6" stroke-width="1.1"/><path d="M7.5 8 H15" stroke="#2E2E2E" stroke-width="1" stroke-dasharray="2 1"/></svg>
<svg class="a" style="left:1152px;top:819px;" width="17" height="17" viewBox="0 0 17 17"><rect x="1" y="1" width="7.2" height="7" fill="#3A3A3A"/><path d="M2.6 6.8 L4.6 2.2 L6.6 6.8 M3.4 5.2 H5.8" stroke="#fff" stroke-width="1.1" fill="none"/><path d="M2 10.6 H7 L2 14.4 H7.2" stroke="#2E2E2E" stroke-width="1.5" fill="none"/><path d="M12.2 4 V12.6 M9.4 9.6 L12.2 12.8 L15 9.6" stroke="#0E62B4" stroke-width="1.9" fill="none"/></svg>
<div class="a " style="left:1175px;top:818px;width:1px;height:20px;background:#CCCEDB;"></div>
<svg class="a" style="left:1182.5px;top:820.3px;" width="13" height="13" viewBox="0 0 13 13"><path d="M7.2 5.8 L1.9 11.1" stroke="#B4B4B8" stroke-width="2.9" stroke-linecap="round"/><circle cx="8.7" cy="4.3" r="3.9" fill="#B4B4B8"/><path d="M9.3 3.7 L13.5 -0.5" stroke="#EFEFF2" stroke-width="2.7"/></svg>
</body></html>
